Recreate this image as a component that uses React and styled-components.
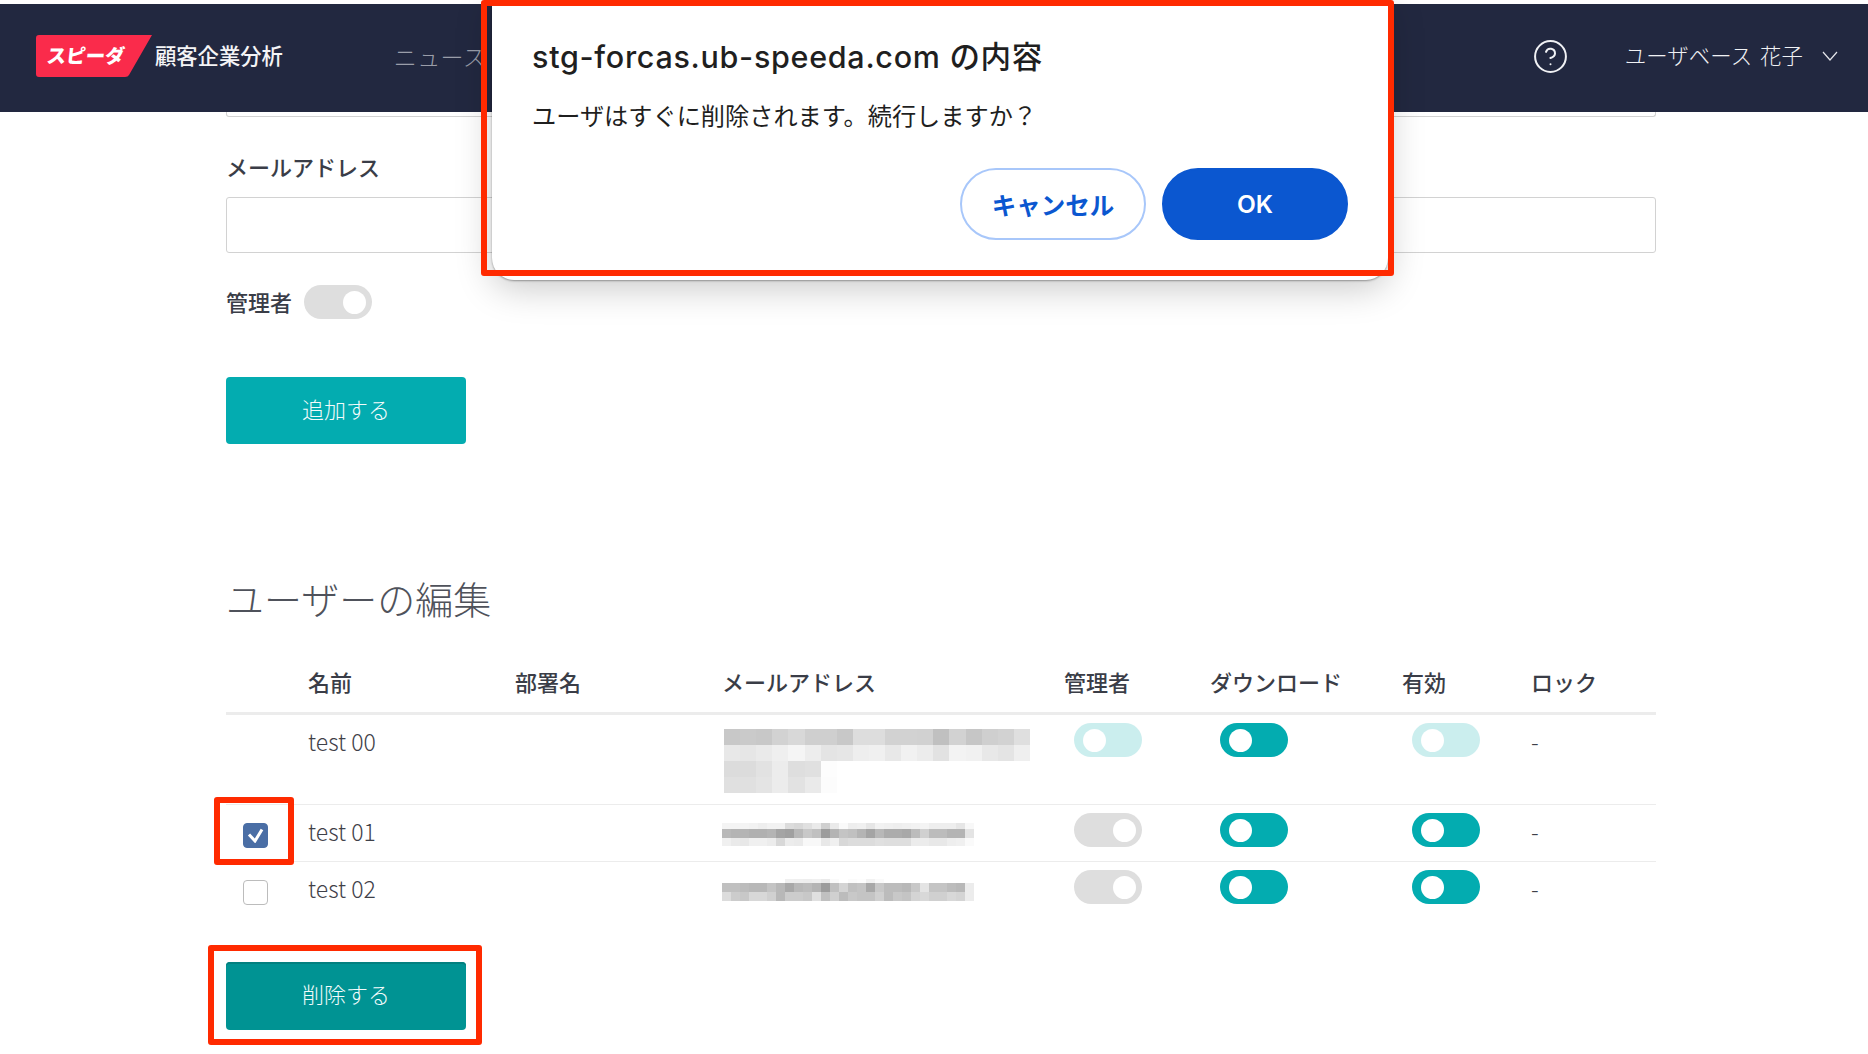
import React from "react";
import styled, { createGlobalStyle } from "styled-components";
import { CircleHelp } from "lucide-react";

const GlobalStyle = createGlobalStyle`
  html, body {
    margin: 0;
    padding: 0;
    height: 100%;
    overflow: hidden;
    background: #fff;
    font-family: "Noto Sans CJK JP", "Noto Sans", sans-serif;
  }
  * { box-sizing: border-box; }
`;

const Page = styled.div`
  position: relative;
  width: 1868px;
  height: 1054px;
  padding-top: 4px;
  overflow: hidden;
  background: #fff;
`;

const Header = styled.header`
  display: flex;
  align-items: center;
  height: 108px;
  padding: 0 30px 4px 36px;
  background: #222840;
`;

const Brand = styled.div`
  margin: -3px 0 0 3px;
  color: #f4f4f6;
  font-size: 21.3px;
  font-weight: 500;
  line-height: 30px;
`;

const NavItem = styled.div`
  margin: -1px 0 0 111px;
  color: #9a9da9;
  font-size: 23px;
  font-weight: 300;
  letter-spacing: 0.4px;
`;

const HeaderRight = styled.div`
  display: flex;
  align-items: center;
  margin-left: auto;
  color: #f0f1f4;
`;

const UserName = styled.div`
  margin: -4px 0 0 56px;
  font-size: 21.4px;
  font-weight: 300;
  letter-spacing: 0.1px;
  word-spacing: 3px;
`;

const Chevron = styled.svg`
  display: block;
  width: 16px;
  height: 10px;
  margin-left: 19px;
`;

const Main = styled.main`
  width: 1430px;
  margin-left: 226px;
`;

const CutInput = styled.div`
  height: 5px;
  border: 1px solid #d2d2d2;
  border-top: 0;
  border-radius: 0 0 3px 3px;
`;

const Label = styled.div`
  margin-top: 33px;
  color: #3a3d47;
  font-size: 22px;
  font-weight: 500;
  line-height: 32px;
`;

const TextInput = styled.div`
  height: 56px;
  margin-top: 15px;
  border: 1px solid #d2d2d2;
  border-radius: 3px;
`;

const AdminRow = styled.div`
  display: flex;
  align-items: center;
  gap: 12px;
  margin-top: 32px;
`;

const AdminLabel = styled.span`
  margin-top: -3px;
  color: #3a3d47;
  font-size: 22px;
  font-weight: 500;
`;

const Track = styled.div`
  display: flex;
  align-items: center;
  justify-content: ${({ $on }) => ($on ? "flex-start" : "flex-end")};
  width: 67.5px;
  height: 34px;
  padding: 0 6px 0 9px;
  border-radius: 17px;
  background: ${({ $on }) => ($on ? "#03acb0" : "#dedede")};
  opacity: ${({ $faded }) => ($faded ? 0.2 : 1)};
`;

const Knob = styled.div`
  width: 23px;
  height: 23px;
  border-radius: 50%;
  background: #fff;
`;

const Toggle = ({ on, faded }) => (
  <Track $on={on} $faded={faded}>
    <Knob />
  </Track>
);

const ActionButton = styled.button`
  display: block;
  width: 240px;
  height: 67px;
  padding: 0 0 6px;
  border: 0;
  border-radius: 4px;
  background: ${({ $pressed }) => ($pressed ? "#009393" : "#03acb0")};
  box-shadow: ${({ $pressed }) => ($pressed ? "inset 0 2px 0 #03807f" : "none")};
  color: #f2fbfb;
  font-family: inherit;
  font-size: 22px;
  font-weight: 300;
`;

const AddButton = styled(ActionButton)`
  margin-top: 58px;
`;

const DeleteButton = styled(ActionButton)`
  margin-top: 43px;
  height: 68px;
`;

const Heading = styled.h2`
  margin: 126px 0 27px;
  color: #4f525b;
  font-size: 38px;
  font-weight: 300;
  line-height: 56px;
`;

const Row = styled.div`
  display: grid;
  grid-template-columns: 82px 207px 207px 342px 146px 192px 129px 1fr;
  min-height: ${({ $head }) => ($head ? "62px" : "57px")};
  border-bottom: ${({ $head, $last }) =>
    $head ? "3px solid #ececec" : $last ? "0" : "1px solid #ececec"};
`;

const HeadCell = styled.div`
  padding-top: 12px;
  color: #3a3d47;
  font-size: 22px;
  font-weight: 500;
  line-height: 32px;
  white-space: nowrap;
`;

const Cell = styled.div`
  padding-top: 11px;
  color: #3f4149;
  font-size: 23px;
  line-height: 30px;
  font-weight: 300;
`;

const CheckCell = styled.div`
  padding: 18px 0 0 17px;
`;

const CheckBox = styled.div`
  display: flex;
  align-items: center;
  justify-content: center;
  width: 25px;
  height: 25px;
  border-radius: 4px;
  border: 1px solid ${({ $checked }) => ($checked ? "#4a6ea5" : "#bcbcbc")};
  background: ${({ $checked }) => ($checked ? "#4a6ea5" : "#fff")};
`;

const MosaicCell = styled.div`
  padding-top: ${({ $top }) => $top}px;
  padding-bottom: ${({ $bottom }) => $bottom || 0}px;
  margin-left: ${({ $shift }) => $shift}px;
`;

const ToggleCell = styled.div`
  padding: 8px 0 0 10px;
`;

const Backdrop = styled.div`
  position: absolute;
  top: 0;
  left: 492px;
  width: 896px;
  height: 280px;
  padding: 32px 40px 0 40px;
  border-radius: 0 0 22px 22px;
  background: #fff;
  box-shadow: 0 1px 2px rgba(0, 0, 0, 0.35), 0 8px 36px rgba(0, 0, 0, 0.22);
  font-family: "Inter", "Noto Sans CJK JP", sans-serif;
`;

const DialogTitle = styled.div`
  color: #1f1f1f;
  font-size: 30.5px;
  font-weight: 500;
  letter-spacing: 0.7px;
  line-height: 50px;
  white-space: nowrap;
`;

const DialogBody = styled.div`
  margin-top: 18px;
  color: #1f1f1f;
  font-size: 24.2px;
  line-height: 34px;
`;

const DialogActions = styled.div`
  display: flex;
  justify-content: flex-end;
  gap: 16px;
  margin-top: 34px;
`;

const PillButton = styled.button`
  width: 186px;
  height: 72px;
  padding: 0;
  border: 2px solid ${({ $primary }) => ($primary ? "#0b57d0" : "#a8c7fa")};
  border-radius: 36px;
  background: ${({ $primary }) => ($primary ? "#0b57d0" : "#fff")};
  color: ${({ $primary }) => ($primary ? "#fff" : "#0b57d0")};
  font-family: inherit;
  font-size: 24.5px;
  font-weight: 600;
`;

const Callout = styled.div`
  position: absolute;
  top: ${({ $y }) => $y}px;
  left: ${({ $x }) => $x}px;
  width: ${({ $w }) => $w}px;
  height: ${({ $h }) => $h}px;
  border: 6px solid #ff2a00;
  border-radius: 3px;
  pointer-events: none;
`;

const Logo = () => (
  <svg width="116" height="42" viewBox="0 0 116 42" style={{ display: "block" }}>
    <path
      d="M3 0H116L93 40Q92 42 89 42H3Q0 42 0 39V3Q0 0 3 0Z"
      fill="#fa2b4b"
    />
    <text
      x="10"
      y="28"
      fill="#fff"
      fontSize="19.5"
      fontWeight="900"
      fontFamily="'Noto Sans CJK JP', sans-serif"
      transform="skewX(-6) translate(3 0)"
    >
      スピーダ
    </text>
  </svg>
);

// 個人情報のモザイク: 濃さの行をそのまま矩形にする
const Mosaic = ({ rows, cell }) => {
  const height = rows.reduce((sum, r) => sum + r.h, 0);
  const width = Math.max(...rows.map((r) => r.c.length)) * cell;
  let y = 0;
  return (
    <svg width={width} height={height} style={{ display: "block" }} shapeRendering="crispEdges">
      {rows.map((r) => {
        const top = y;
        y += r.h;
        return r.c.map((v, i) => (
          <rect key={`${top}-${i}`} x={i * cell} y={top} width={cell} height={r.h} fill={`#${v}${v}${v}`} />
        ));
      })}
    </svg>
  );
};

const split = (s) => s.split(" ");

const mosaic00 = [
  { h: 16, c: split("c8 ca c8 d2 d8 cf cf c8 dd dd d2 d2 d1 c0 d2 c6 cf d2 df") },
  { h: 16, c: split("e8 e6 ea ef f5 ed e4 e6 ee f0 e8 f1 ec e2 f3 f1 e8 e4 ef") },
  { h: 16, c: split("dc dc e2 ec de e0 fd") },
  { h: 16, c: split("e0 e0 e4 ec e2 ea fc") },
];

const mosaic01 = [
  { h: 6, c: split("f4 f4 f4 f2 ee f2 f2 dc d8 e0 ea d0 ea fa ee f0 e6 f2 f0 ee f0 f2 f4 ee ee ee e6 f8") },
  { h: 9, c: split("b8 b4 b4 b0 b0 b4 a4 a0 b8 c8 c0 9c b4 c4 c0 b4 a4 b8 ac ac a8 bc d0 bc bc b4 b4 e4") },
  { h: 8, c: split("f0 ea e8 f0 f0 ec d8 ec ea f8 f8 e8 f0 d8 dc dc dc e0 de de de ec ec e8 e8 ee f0 fa") },
];

const mosaic02 = [
  { h: 4, c: split("ff ff ff ff ff ff ff f0 ef ee f0 ea fa ff fb fd f2 fa ff ff ff ff ff ff ff ff ff ff") },
  { h: 9, c: split("c0 c0 bc b8 b8 c4 b8 a8 b8 bc b4 9c c0 d4 c0 c4 a8 c8 bc bc b8 c8 e4 c4 c4 bc b8 ec") },
  { h: 9, c: split("dc cc c8 d8 d8 d0 b8 cc cc c8 e0 c0 d0 bc c8 c4 c4 d0 bc c8 c4 d4 d8 d0 d0 d8 d4 ec") },
];

const users = [
  { name: "test 00", mosaic: mosaic00, cell: 16.1, top: 14, bottom: 11, shift: 2, admin: { faded: true, on: true }, enabled: { on: true, faded: true } },
  { name: "test 01", mosaic: mosaic01, cell: 9, top: 18, shift: 0, checked: true, admin: { on: false }, enabled: { on: true } },
  { name: "test 02", mosaic: mosaic02, cell: 9, top: 17, shift: 0, checked: false, admin: { on: false }, enabled: { on: true }, last: true },
];

const columns = ["", "名前", "部署名", "メールアドレス", "管理者", "ダウンロード", "有効", "ロック"];

const App = () => {
  return (
    <Page>
      <GlobalStyle />
      <Header>
        <Logo />
        <Brand>顧客企業分析</Brand>
        <NavItem>ニュース</NavItem>
        <HeaderRight>
          <CircleHelp size={37} strokeWidth={1.3} />
          <UserName>ユーザベース 花子</UserName>
          <Chevron viewBox="0 0 16 10">
            <path d="M1 1L8 9L15 1" fill="none" stroke="#e4e5ea" strokeWidth="1.2" />
          </Chevron>
        </HeaderRight>
      </Header>
      <Main>
        <CutInput />
        <Label>メールアドレス</Label>
        <TextInput />
        <AdminRow>
          <AdminLabel>管理者</AdminLabel>
          <Toggle on={false} />
        </AdminRow>
        <AddButton>追加する</AddButton>
        <Heading>ユーザーの編集</Heading>
        <Row $head>
          {columns.map((c) => (
            <HeadCell key={c}>{c}</HeadCell>
          ))}
        </Row>
        {users.map((u) => (
          <Row key={u.name} $last={u.last}>
            <CheckCell>
              {u.checked !== undefined && (
                <CheckBox $checked={u.checked}>
                  {u.checked && (
                    <svg width="17" height="15" viewBox="0 0 17 15">
                      <path d="M2 6.5L8 13L15 1.5" fill="none" stroke="#fff" strokeWidth="3" />
                    </svg>
                  )}
                </CheckBox>
              )}
            </CheckCell>
            <Cell>{u.name}</Cell>
            <Cell />
            <MosaicCell $top={u.top} $bottom={u.bottom} $shift={u.shift}>
              <Mosaic rows={u.mosaic} cell={u.cell} />
            </MosaicCell>
            <ToggleCell>
              <Toggle {...u.admin} />
            </ToggleCell>
            <ToggleCell>
              <Toggle on />
            </ToggleCell>
            <ToggleCell>
              <Toggle {...u.enabled} />
            </ToggleCell>
            <Cell>-</Cell>
          </Row>
        ))}
        <DeleteButton $pressed>削除する</DeleteButton>
      </Main>

      <Backdrop>
        <DialogTitle>stg-forcas.ub-speeda.com の内容</DialogTitle>
        <DialogBody>ユーザはすぐに削除されます。続行しますか？</DialogBody>
        <DialogActions>
          <PillButton>キャンセル</PillButton>
          <PillButton $primary>OK</PillButton>
        </DialogActions>
      </Backdrop>

      <Callout $x={481} $y={0} $w={913} $h={276} />
      <Callout $x={214} $y={797} $w={80} $h={68} />
      <Callout $x={208} $y={945} $w={274} $h={100} />
    </Page>
  );
};

export default App;
